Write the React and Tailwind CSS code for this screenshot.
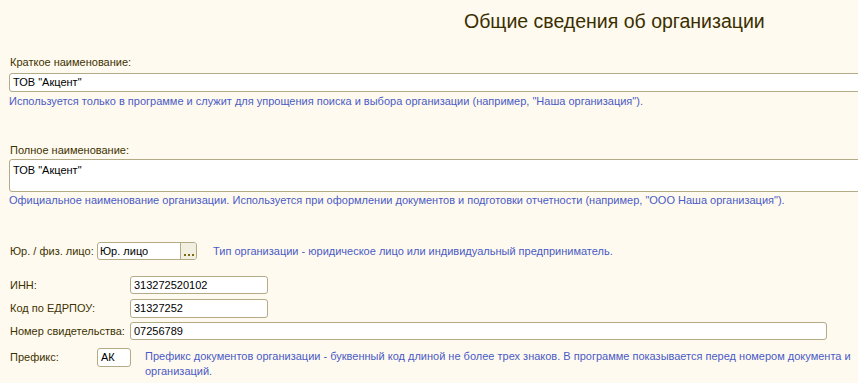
const hint = 'text-[#4a5bc6]';
const label = 'text-[#3d3200]';

function Field({ className = '', children }) {
  return (
    <div className={`bg-white border border-[#b3aa86] rounded-[3px] flex items-center pl-[3px] text-black ${className}`}>
      {children}
    </div>
  );
}

export default function App() {
  return (
    <div className="w-[858px] h-[383px] overflow-hidden bg-[#fffaef] text-[11px] font-['Liberation_Sans',Arial,sans-serif]">
      {/* Заголовок */}
      <div className="pt-[9px] pl-[464px] h-[34px] text-[19.5px] leading-[24px] text-[#3a2f00] whitespace-nowrap">
        Общие сведения об организации
      </div>

      {/* Краткое наименование */}
      <div className={`mt-[21px] pl-[10px] h-[14px] leading-[14px] ${label}`}>Краткое наименование:</div>
      <Field className="mt-[4px] ml-[9px] w-[870px] h-[19px]">ТОВ "Акцент"</Field>
      <div className={`mt-[2px] pl-[9px] h-[14px] leading-[14px] whitespace-nowrap ${hint}`}>
        Используется только в программе и служит для упрощения поиска и выбора организации (например, "Наша организация").
      </div>

      {/* Полное наименование */}
      <div className={`mt-[35px] pl-[10px] h-[14px] leading-[14px] ${label}`}>Полное наименование:</div>
      <Field className="mt-[2px] ml-[9px] w-[870px] h-[33px] !items-start pt-[2px]">ТОВ "Акцент"</Field>
      <div className={`mt-[1px] pl-[9px] h-[14px] leading-[14px] whitespace-nowrap ${hint}`}>
        Официальное наименование организации. Используется при оформлении документов и подготовки отчетности (например, "ООО Наша организация").
      </div>

      {/* Юр. / физ. лицо */}
      <div className="mt-[35px] flex items-center h-[18px]">
        <div className={`w-[97px] pl-[10px] ${label}`}>Юр. / физ. лицо:</div>
        <div className="w-[100px] h-[18px] bg-white border border-[#b3aa86] rounded-[3px] flex overflow-hidden">
          <div className="flex-1 flex items-center pl-[2px] text-black">Юр. лицо</div>
          <div className="w-[16px] h-full border-l border-[#b3aa86] bg-[#f3efe0] flex items-end justify-center pb-[3px] gap-[2px]">
            <span className="w-[2px] h-[2px] bg-[#7a6a10]" />
            <span className="w-[2px] h-[2px] bg-[#7a6a10]" />
            <span className="w-[2px] h-[2px] bg-[#7a6a10]" />
          </div>
        </div>
        <div className={`ml-[16px] whitespace-nowrap ${hint}`}>
          Тип организации - юридическое лицо или индивидуальный предприниматель.
        </div>
      </div>

      {/* Коды */}
      <div className="mt-[16px] flex items-center h-[18px]">
        <div className={`w-[130px] pl-[10px] ${label}`}>ИНН:</div>
        <Field className="w-[138px] h-[18px]">313272520102</Field>
      </div>
      <div className="mt-[5px] flex items-center h-[19px]">
        <div className={`w-[130px] pl-[10px] ${label}`}>Код по ЕДРПОУ:</div>
        <Field className="w-[138px] h-[19px]">31327252</Field>
      </div>
      <div className="mt-[4px] flex items-center h-[18px]">
        <div className={`w-[130px] pl-[10px] whitespace-nowrap ${label}`}>Номер свидетельства:</div>
        <Field className="w-[697px] h-[18px]">07256789</Field>
      </div>

      {/* Префикс */}
      <div className="mt-[8px] flex items-start">
        <div className={`w-[97px] pl-[10px] h-[18px] flex items-center ${label}`}>Префикс:</div>
        <Field className="w-[34px] h-[19px]">АК</Field>
        <div className={`ml-[14px] pt-[1px] leading-[15px] ${hint}`}>
          <div className="whitespace-nowrap">
            Префикс документов организации - буквенный код длиной не более трех знаков. В программе показывается перед номером документа и
          </div>
          <div>организаций.</div>
        </div>
      </div>
    </div>
  );
}
